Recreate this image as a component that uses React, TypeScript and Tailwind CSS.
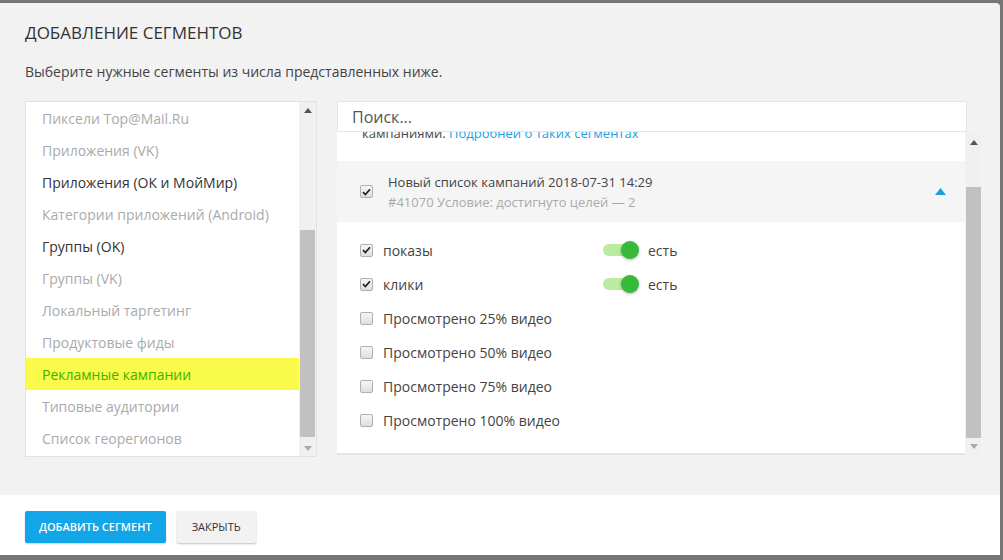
import React from "react";

function Cb({ checked }: { checked?: boolean }) {
  return (
    <div className="w-[13px] h-[13px] shrink-0 rounded-[2px] border border-[#b0b0b0] bg-linear-to-b from-[#f6f6f6] to-[#dedede] flex items-center justify-center">
      {checked && (
        <svg width="9" height="8" viewBox="0 0 9 8">
          <path d="M1 4.2 L3.4 6.6 L8 1.2" stroke="#222" strokeWidth="1.7" fill="none" />
        </svg>
      )}
    </div>
  );
}

function Toggle() {
  return (
    <div className="relative w-[36px] h-[18px] flex items-center">
      <div className="w-[32px] h-[12px] rounded-full bg-[#b9eba0]" />
      <div className="absolute right-0 top-0 w-[18px] h-[18px] rounded-full bg-[#37b93a] shadow-[0_1px_3px_rgba(0,0,0,0.3)]" />
    </div>
  );
}

function Up({ color = "#555" }: { color?: string }) {
  return (
    <svg width="8" height="5" viewBox="0 0 8 5">
      <path d="M0 5 L4 0 L8 5 Z" fill={color} />
    </svg>
  );
}
function Down({ color = "#aaa" }: { color?: string }) {
  return (
    <svg width="8" height="5" viewBox="0 0 8 5">
      <path d="M0 0 L4 5 L8 0 Z" fill={color} />
    </svg>
  );
}

const leftItems: { t: string; active?: boolean; sel?: boolean }[] = [
  { t: "Пиксели Top@Mail.Ru" },
  { t: "Приложения (VK)" },
  { t: "Приложения (ОК и МойМир)", active: true },
  { t: "Категории приложений (Android)" },
  { t: "Группы (OK)", active: true },
  { t: "Группы (VK)" },
  { t: "Локальный таргетинг" },
  { t: "Продуктовые фиды" },
  { t: "Рекламные кампании", sel: true },
  { t: "Типовые аудитории" },
  { t: "Список георегионов" },
];

const subItems: { t: string; checked?: boolean }[] = [
  { t: "показы", checked: true },
  { t: "клики", checked: true },
  { t: "Просмотрено 25% видео" },
  { t: "Просмотрено 50% видео" },
  { t: "Просмотрено 75% видео" },
  { t: "Просмотрено 100% видео" },
];

export default function App() {
  return (
    <div
      className="w-[1003px] h-[560px] bg-[#767676] overflow-hidden pt-[3px]"
      style={{ fontFamily: '"Open Sans", "Noto Sans", sans-serif' }}
    >
      <div className="w-[1000px] h-[552px] bg-[#f2f2f2] rounded-tr-[4px] flex flex-col">
        <div className="px-[25px] pt-[18px]">
          <div className="text-[17px] leading-[24px] text-[#333]">ДОБАВЛЕНИЕ СЕГМЕНТОВ</div>
          <div className="mt-[18px] text-[14px] leading-[18px] text-[#444]">
            Выберите нужные сегменты из числа представленных ниже.
          </div>
        </div>
        <div className="flex pl-[25px] mt-[20px] h-[356px]">
          {/* left list */}
          <div className="w-[292px] h-[356px] border border-[#e2e2e2] bg-white flex">
            <div className="w-[273px] overflow-hidden flex flex-col">
              {leftItems.map((it) => (
                <div
                  key={it.t}
                  className={
                    "h-[32px] shrink-0 flex items-center pl-[16px] text-[14px] whitespace-nowrap " +
                    (it.sel
                      ? "bg-[#fafa4a] text-[#3fb400]"
                      : it.active
                      ? "text-[#333]"
                      : "text-[#aaa]")
                  }
                >
                  {it.t}
                </div>
              ))}
            </div>
            <div className="w-[17px] bg-[#f0f0f0] flex flex-col items-center">
              <div className="h-[16px] flex items-center justify-center">
                <Up />
              </div>
              <div className="flex-1 w-full px-[1px] flex flex-col">
                <div className="h-[112px]" />
                <div className="h-[207px] bg-[#c1c1c1]" />
              </div>
              <div className="h-[16px] flex items-center justify-center">
                <Down />
              </div>
            </div>
          </div>
          {/* right */}
          <div className="ml-[20px] w-[644px] flex flex-col">
            <div className="w-[630px] h-[31px] shrink-0 bg-white border border-[#e6e6e6] flex items-center pl-[14px] text-[16px] text-[#555]">
              Поиск...
            </div>
            <div className="flex h-[324px]">
              <div className="w-[628px] h-[323px] bg-white border-b-2 border-[#e4e4e4] overflow-hidden flex flex-col">
                <div className="-mt-[8px] pl-[25px] text-[13px] leading-[18px] text-[#444] whitespace-nowrap">
                  кампаниями. <span className="text-[#1ba1e2]">Подробней о таких сегментах</span>
                </div>
                <div className="mt-[19px] h-[61px] shrink-0 bg-[#f5f5f5] flex items-center pl-[23px] pr-[19px]">
                  <Cb checked />
                  <div className="ml-[15px] flex-1">
                    <div className="text-[13px] leading-[20px] text-[#444]">Новый список кампаний 2018-07-31 14:29</div>
                    <div className="text-[13px] leading-[20px] text-[#aaa]">#41070 Условие: достигнуто целей — 2</div>
                  </div>
                  <svg width="11" height="7" viewBox="0 0 11 7">
                    <path d="M0 7 L5.5 0 L11 7 Z" fill="#1a9fe0" />
                  </svg>
                </div>
                <div className="pt-[11px] flex flex-col">
                  {subItems.map((s) => (
                    <div key={s.t} className="h-[34px] flex items-center pl-[23px]">
                      <Cb checked={s.checked} />
                      <div className="ml-[10px] w-[220px] text-[14px] text-[#444]">{s.t}</div>
                      {s.checked && (
                        <div className="flex items-center">
                          <Toggle />
                          <span className="ml-[9px] text-[14px] text-[#444]">есть</span>
                        </div>
                      )}
                    </div>
                  ))}
                </div>
              </div>
              <div className="ml-[1px] w-[15px] h-[323px] bg-[#f0f0f0] flex flex-col items-center">
                <div className="h-[20px] flex items-center justify-center">
                  <Up />
                </div>
                <div className="w-full flex flex-col">
                  <div className="h-[35px]" />
                  <div className="h-[251px] bg-[#c1c1c1]" />
                </div>
                <div className="h-[16px] flex items-center justify-center">
                  <Down />
                </div>
              </div>
            </div>
          </div>
        </div>
        <div className="mt-[38px] flex-1 bg-white flex items-start pl-[25px] pt-[16px] gap-[11px]">
          <div className="h-[32px] px-[14px] rounded-[2px] bg-[#12a5e8] text-white text-[11px] font-semibold flex items-center shadow-[0_1px_2px_rgba(0,0,0,0.2)]">
            ДОБАВИТЬ СЕГМЕНТ
          </div>
          <div className="h-[32px] px-[15px] rounded-[2px] bg-[#f2f2f2] text-[#333] text-[11px] flex items-center shadow-[0_1px_2px_rgba(0,0,0,0.25)]">
            ЗАКРЫТЬ
          </div>
        </div>
      </div>
    </div>
  );
}
